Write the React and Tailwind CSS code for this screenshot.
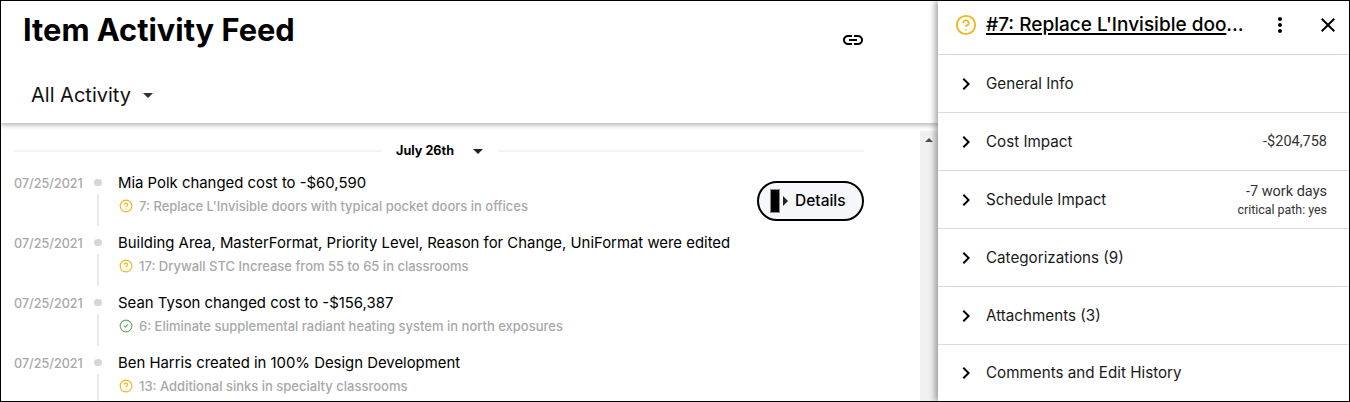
import { CircleCheck, CircleHelp } from 'lucide-react';

const font = 'font-["Inter","Liberation_Sans",sans-serif]';

const feedRows = [
  {
    date: '07/25/2021',
    title: 'Mia Polk changed cost to -$60,590',
    item: "7: Replace L'Invisible doors with typical pocket doors in offices",
    done: false,
    details: true,
  },
  {
    date: '07/25/2021',
    title: 'Building Area, MasterFormat, Priority Level, Reason for Change, UniFormat were edited',
    item: '17: Drywall STC Increase from 55 to 65 in classrooms',
    done: false,
  },
  {
    date: '07/25/2021',
    title: 'Sean Tyson changed cost to -$156,387',
    item: '6: Eliminate supplemental radiant heating system in north exposures',
    done: true,
  },
  {
    date: '07/25/2021',
    title: 'Ben Harris created in 100% Design Development',
    item: '13: Additional sinks in specialty classrooms',
    done: false,
  },
];

const sections = [
  { label: 'General Info' },
  { label: 'Cost Impact', value: '-$204,758' },
  { label: 'Schedule Impact', value: '-7 work days', note: 'critical path: yes' },
  { label: 'Categorizations (9)' },
  { label: 'Attachments (3)' },
  { label: 'Comments and Edit History' },
];

function MaterialIcon({ d, className }) {
  return (
    <svg viewBox="0 0 24 24" width="24" height="24" fill="currentColor" className={className}>
      <path d={d} />
    </svg>
  );
}

function FeedRow({ date, title, item, done, details }) {
  return (
    <div className="flex h-[60px] shrink-0">
      <div className="w-[90px] pl-[13px] pt-[8px] text-[12.6px] font-medium leading-5 text-[#a8a8a8]">{date}</div>
      <div className="flex w-[14px] flex-col items-center pt-[7px]">
        <div className="mt-[6px] h-2 w-2 rounded-full bg-[#d3d6db]" />
        <div className="mt-[8px] h-[36px] w-0.5 bg-[#e6e8ea]" />
      </div>
      <div className="ml-[13px] flex min-w-0 flex-1 justify-between">
        <div className="pt-[6px]">
          <div className="text-[14.9px] leading-[22px] text-black">{title}</div>
          <div className="mt-[2px] flex items-center text-[13px] font-medium leading-5 text-[#a8a8a8]">
            {done ? (
              <CircleCheck size={14} strokeWidth={2} className="ml-px mr-[6px] text-[#6aa96f]" />
            ) : (
              <CircleHelp size={14} strokeWidth={2} className="ml-px mr-[6px] text-[#f0b81c]" />
            )}
            {item}
          </div>
        </div>
        {details && (
          <button
            type="button"
            className="mt-[15px] flex h-10 w-[107px] items-center rounded-full border-2 border-black bg-[#f5f7fa] pl-[11px] text-[15.5px] font-medium text-black"
          >
            <span className="h-[24px] w-[10px] border border-[#8a8a8a] bg-black" />
            <span className="ml-[3px] h-0 w-0 border-y-[5px] border-l-[5px] border-y-transparent border-l-[#222]" />
            <span className="ml-[7px]">Details</span>
          </button>
        )}
      </div>
    </div>
  );
}

function SectionRow({ label, value, note }) {
  return (
    <div className="flex h-[58px] shrink-0 items-center border-b border-[#d5dbe5] pl-4 pr-[22px] last:border-b-0 last:pb-[3px]">
      <MaterialIcon className="shrink-0 text-black" d="M10 6L8.59 7.41 13.17 12l-4.58 4.59L10 18l6-6z" />
      <span className="ml-2 mt-[2px] flex-1 text-[15.2px] text-[#1a1a1a]">{label}</span>
      {value && (
        <div className={`text-right font-["Roboto",sans-serif] text-[#333] ${note ? 'pt-[2px]' : ''}`}>
          <div className="text-[14.5px] leading-[19px]">{value}</div>
          {note && <div className="text-[12.4px] leading-[18px]">{note}</div>}
        </div>
      )}
    </div>
  );
}

export default function App() {
  return (
    <div className={`${font} flex h-[402px] w-[1350px] overflow-hidden border border-black bg-white`}>
      <div className="flex min-w-0 flex-1 flex-col">
        <header className="relative z-10 h-[122px] shrink-0 bg-white shadow-[0_2px_5px_rgba(0,0,0,0.3)]">
          <div className="flex h-[78px] pl-[22px] pr-[73px]">
            <h1 className="flex-1 pt-[9px] text-[30.8px] font-bold leading-10 text-black">Item Activity Feed</h1>
            <MaterialIcon
              className="mt-[27px] text-black"
              d="M3.9 12c0-1.71 1.39-3.1 3.1-3.1h4V7H7c-2.76 0-5 2.24-5 5s2.24 5 5 5h4v-1.9H7c-1.71 0-3.1-1.39-3.1-3.1zM8 13h8v-2H8v2zm9-6h-4v1.9h4c1.71 0 3.1 1.39 3.1 3.1s-1.39 3.1-3.1 3.1h-4V17h4c2.76 0 5-2.24 5-5s-2.24-5-5-5z"
            />
          </div>
          <div className="flex items-center pl-[30px] text-[20px] leading-8 text-[#111]">
            All Activity
            <span className="ml-[12px] h-0 w-0 border-x-[5px] border-t-[5px] border-x-transparent border-t-[#333]" />
          </div>
        </header>
        <div className="flex min-h-0 flex-1">
          <main className="min-w-0 flex-1 overflow-hidden">
            <div className="ml-[13px] mr-[56px] mt-[20px] flex h-4 items-center">
              <div className="h-0.5 flex-1 bg-[#f2f3f4]" />
              <div className="ml-[14px] mr-[15px] flex items-center text-[12.6px] font-bold text-black">
                July 26th
                <span className="ml-[19px] h-0 w-0 border-x-[5px] border-t-[5px] border-x-transparent border-t-[#222]" />
              </div>
              <div className="h-0.5 w-[366px] bg-[#f2f3f4]" />
            </div>
            <div className="mr-[56px] mt-[7px] flex flex-col">
              {feedRows.map((row) => (
                <FeedRow key={row.item} {...row} />
              ))}
            </div>
          </main>
          <div className="mt-[8px] flex w-[18px] shrink-0 justify-center bg-[#f0f0f0] pt-[7px]">
            <span className="h-0 w-0 border-x-[4px] border-b-[4px] border-x-transparent border-b-[#505050]" />
          </div>
        </div>
      </div>
      <aside className="relative z-20 flex w-[411px] shrink-0 flex-col bg-white shadow-[-3px_0_6px_rgba(0,0,0,0.35)]">
        <div className="flex h-[54px] shrink-0 items-center border-b border-[#d5dbe5] pb-[5px] pl-[17px] pr-[9px]">
          <CircleHelp size={22} strokeWidth={2} className="shrink-0 text-[#f0b81c]" />
          <span className="ml-[9px] w-[263px] truncate text-[19px] font-medium text-black">
            <span className="underline decoration-2 underline-offset-2">
              #7: Replace L'Invisible doors with typical pocket doors in offices
            </span>
          </span>
          <MaterialIcon
            className="ml-[20px] shrink-0 text-black"
            d="M12 8c1.1 0 2-.9 2-2s-.9-2-2-2-2 .9-2 2 .9 2 2 2zm0 2c-1.1 0-2 .9-2 2s.9 2 2 2 2-.9 2-2-.9-2-2-2zm0 6c-1.1 0-2 .9-2 2s.9 2 2 2 2-.9 2-2-.9-2-2-2z"
          />
          <MaterialIcon
            className="ml-[24px] shrink-0 text-black"
            d="M19 6.41L17.59 5 12 10.59 6.41 5 5 6.41 10.59 12 5 17.59 6.41 19 12 13.41 17.59 19 19 17.59 13.41 12z"
          />
        </div>
        {sections.map((section) => (
          <SectionRow key={section.label} {...section} />
        ))}
      </aside>
    </div>
  );
}
